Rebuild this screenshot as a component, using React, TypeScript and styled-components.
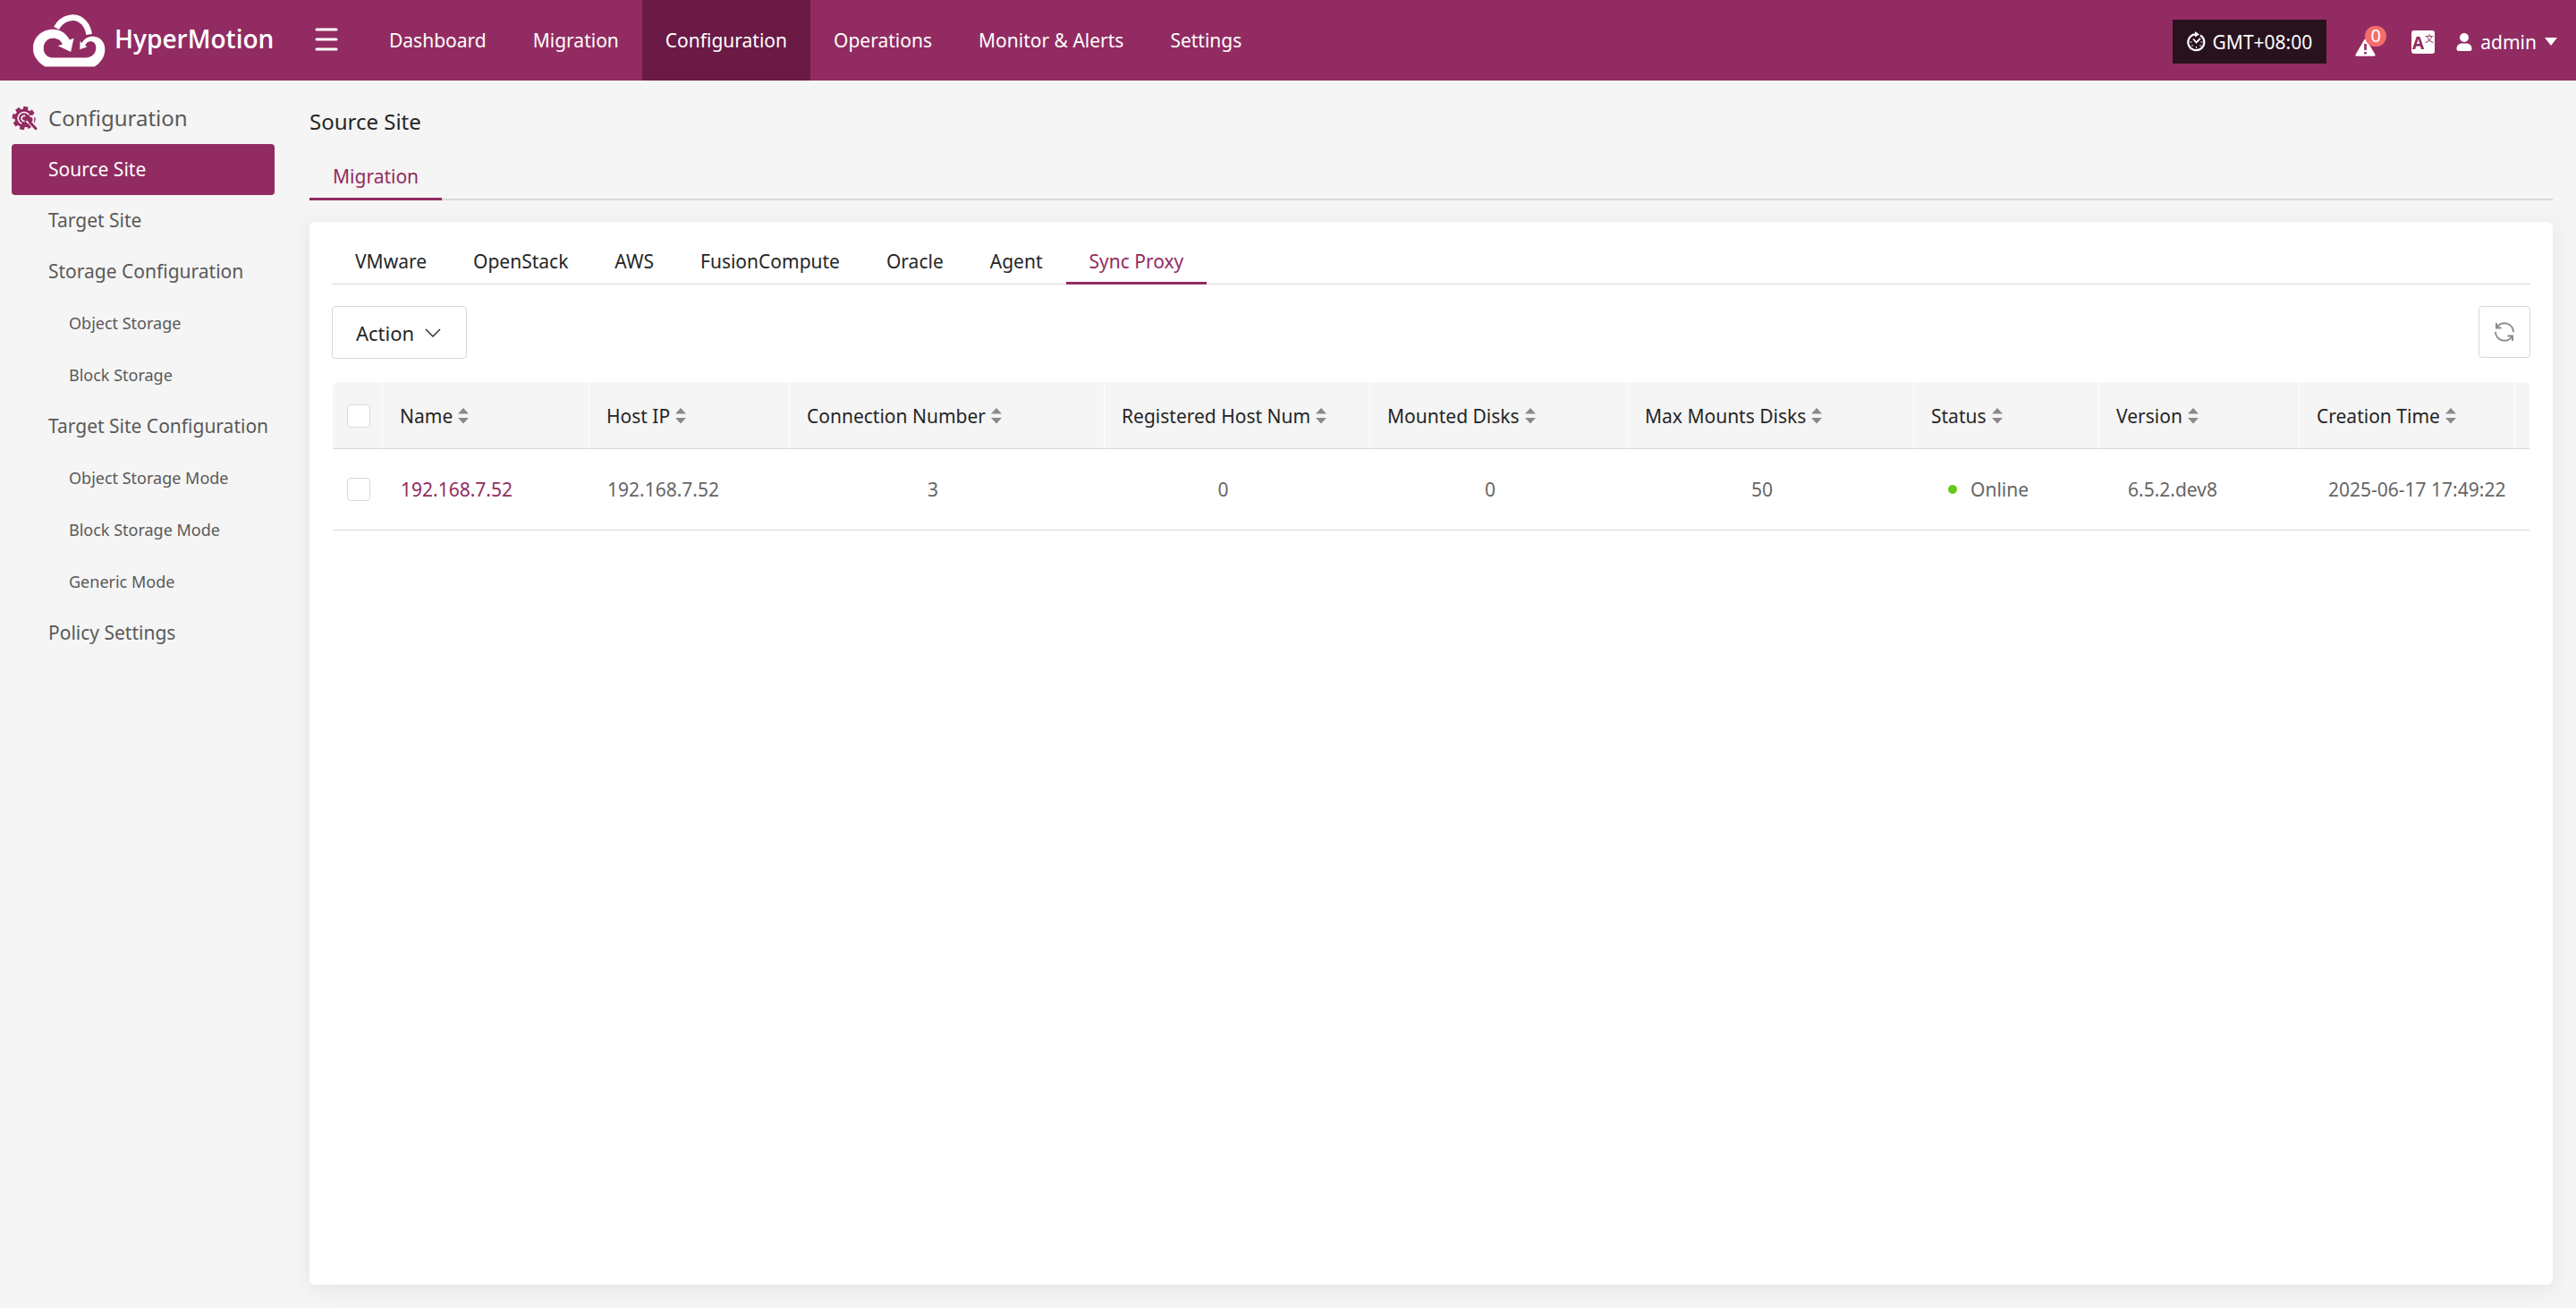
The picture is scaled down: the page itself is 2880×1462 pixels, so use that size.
import React from "react";
import styled, { createGlobalStyle, css } from "styled-components";

const color = {
  brand: "#922b61",
  brandDark: "#6a1a45",
  page: "#f5f5f5",
  line: "#d9d9d9",
  ink: "#262626",
  body: "#666666",
  side: "#595959",
  badge: "#f56c6c",
  online: "#67c817",
};

const GlobalStyle = createGlobalStyle`
  *, *::before, *::after { box-sizing: border-box; }
  body {
    margin: 0;
    background: ${color.page};
    color: ${color.ink};
    font-family: "Segoe UI", "Noto Sans", "Noto Sans CJK SC", sans-serif;
    font-size: 21px;
    line-height: 30px;
  }
  button { font: inherit; color: inherit; background: none; border: 0; padding: 0; cursor: pointer; }
  a { color: inherit; text-decoration: none; }
  svg { display: block; flex: none; }
`;

const Page = styled.div`
  min-height: 100vh;
  display: flex;
  flex-direction: column;
`;

const Header = styled.header`
  display: flex;
  align-items: center;
  height: 90px;
  padding: 0 21px 0 37px;
  background: ${color.brand};
  color: #fff;
`;

const Brand = styled.a`
  display: flex;
  align-items: center;
  gap: 10px;
  width: 315px;
  font-family: "Open Sans", "Noto Sans", sans-serif;
  font-size: 28px;
  line-height: 40px;
  font-weight: 600;
`;

const BrandName = styled.span`
  padding-bottom: 4px;
`;

const MenuToggle = styled.button`
  width: 57px;
`;

const TopNav = styled.nav`
  display: flex;
  align-self: stretch;
`;

const TopLink = styled.a<{ $active?: boolean }>`
  display: flex;
  align-items: center;
  padding: 0 26px;
  background: ${(p) => (p.$active ? color.brandDark : "transparent")};
`;

const HeaderTools = styled.div`
  display: flex;
  align-items: center;
  margin-left: auto;
  padding-top: 3px;
`;

const Timezone = styled.button`
  display: flex;
  align-items: center;
  gap: 8px;
  height: 49px;
  padding: 0 16px;
  background: #28121e;
`;

const AlertButton = styled.button`
  position: relative;
  display: flex;
  align-items: flex-end;
  height: 32px;
  margin: 0 40px 0 32px;
`;

const Badge = styled.span`
  position: absolute;
  left: 11px;
  top: -2px;
  width: 24px;
  height: 23px;
  border-radius: 12px;
  background: ${color.badge};
  font-size: 20px;
  line-height: 22px;
  text-align: center;
`;

const UserButton = styled.button`
  display: flex;
  align-items: center;
  gap: 9px;
  margin-left: 24px;
`;

const Body = styled.div`
  flex: 1;
  display: flex;
`;

const Sidebar = styled.aside`
  flex: none;
  width: 320px;
  padding: 24px 13px;
  color: ${color.side};
`;

const SideTitle = styled.h2`
  display: flex;
  align-items: center;
  gap: 12px;
  margin: 0 0 11px;
  font-size: 24px;
  line-height: 36px;
  font-weight: 400;
`;

const SideNav = styled.nav`
  width: 294px;
`;

const SideLink = styled.a<{ $sub?: boolean; $active?: boolean }>`
  display: block;
  padding-left: 41px;
  line-height: 57px;
  border-radius: 4px;
  white-space: nowrap;
  ${(p) =>
    p.$sub &&
    css`
      padding-left: 64px;
      font-size: 18px;
      line-height: 58px;
    `}
  ${(p) =>
    p.$active &&
    css`
      background: ${color.brand};
      color: #fff;
    `}
`;

const Main = styled.main`
  flex: 1;
  min-width: 0;
  display: flex;
  flex-direction: column;
  padding: 28px 26px 26px;
`;

const Title = styled.h1`
  margin: 0 0 18px;
  font-size: 24px;
  line-height: 36px;
  font-weight: 400;
`;

const Tabs = styled.div<{ $rule: number }>`
  display: flex;
  box-shadow: inset 0 -${(p) => p.$rule}px ${color.line};
`;

const Tab = styled.button<{ $active?: boolean }>`
  height: 50px;
  padding: 0 26px;
  color: ${(p) => (p.$active ? color.brand : color.ink)};
  border-bottom: 3px solid ${(p) => (p.$active ? color.brand : "transparent")};
`;

const SiteTab = styled(Tab)`
  height: 52px;
`;

const Card = styled.section`
  flex: 1;
  margin-top: 24px;
  padding: 20px 25px 25px;
  background: #fff;
  border-radius: 6px;
  box-shadow: 0 4px 24px rgba(0, 0, 0, 0.08);
`;

const Toolbar = styled.div`
  display: flex;
  justify-content: space-between;
  margin: 24px 0 26px;
`;

const ActionButton = styled.button`
  display: flex;
  align-items: center;
  gap: 12px;
  height: 59px;
  padding: 0 28px 0 26px;
  border: 1px solid ${color.line};
  border-radius: 4px;
  font-size: 22px;
`;

const RefreshButton = styled.button`
  display: flex;
  align-items: center;
  justify-content: center;
  width: 58px;
  height: 58px;
  border: 1px solid ${color.line};
  border-radius: 4px;
  color: #8a8a8a;
`;

const TableWrap = styled.div`
  margin: 0 1px;
`;

const Table = styled.table`
  width: 100%;
  table-layout: fixed;
  border-collapse: separate;
  border-spacing: 0;
`;

const Th = styled.th`
  height: 75px;
  padding: 2px 0 0 19px;
  background: ${color.page};
  border-right: 1px solid #fff;
  border-bottom: 1px solid ${color.line};
  text-align: left;
  font-weight: 400;
  white-space: nowrap;
  &:first-child { border-top-left-radius: 6px; padding-left: 16px; }
  &:last-child { border-top-right-radius: 6px; border-right: 0; }
`;

const SortButton = styled.button`
  display: flex;
  align-items: center;
  gap: 6px;
`;

const Td = styled.td<{ $align?: "center"; $left?: number; $right?: number }>`
  height: 91px;
  padding: 0 ${(p) => p.$right ?? 0}px 0 ${(p) => p.$left ?? 0}px;
  border-bottom: 1px solid ${color.line};
  color: ${color.body};
  text-align: ${(p) => p.$align ?? "left"};
  white-space: nowrap;
`;

const RowLink = styled.a`
  color: ${color.brand};
`;

const Check = styled.input`
  appearance: none;
  display: block;
  width: 26px;
  height: 26px;
  margin: 0;
  background: #fff;
  border: 1px solid ${color.line};
  border-radius: 4px;
`;

const Status = styled.span`
  display: flex;
  align-items: center;
  gap: 15px;
  &::before {
    content: "";
    width: 10px;
    height: 10px;
    border-radius: 50%;
    background: ${color.online};
  }
`;

const LogoIcon = () => (
  <svg width="81" height="59" viewBox="110 46 242 176" fill="#fff" aria-hidden="true">
    <path d="M188 92C205 58 252 42 280 74C290 86 295 98 297 113" fill="none" stroke="#fff" strokeWidth="20" />
    <path d="M150 221C125 205 110 185 110 160C110 122 140 96 176 96C200 96 220 108 232 131L246 126L236 171L193 151L208 146C202 132 192 126 176 126C158 126 145 140 145 160C145 178 158 190 175 191L286 191C305 190 320 178 320 158C320 143 312 136 302 136C293 136 287 142 284 150L291 154L266 163L267 135L273 142C281 126 295 120 309 120C333 120 350 138 350 163C350 188 335 208 315 221Z" />
  </svg>
);

const MenuIcon = () => (
  <svg width="26" height="28" viewBox="0 0 26 28" stroke="#fff" strokeWidth="3" strokeLinecap="round" aria-hidden="true">
    <path d="M2 2H24M2 13H24M2 24H24" />
  </svg>
);

const GearIcon = () => (
  <svg width="29" height="27" viewBox="38 354 87 81" aria-hidden="true">
    <g fill={color.brand}>
      <circle cx="79" cy="393" r="31" />
      {[0, 45, 90, 135, 180, 225, 270, 315].map((a) => (
        <rect key={a} x="71" y="354" width="16" height="14" rx="2" transform={`rotate(${a + 10} 79 393)`} />
      ))}
    </g>
    <path d="M72 412A20 20 0 1 1 96 382" fill="none" stroke={color.page} strokeWidth="5" />
    <path d="M84 386A9 9 0 1 0 82 403" fill="none" stroke={color.page} strokeWidth="5" />
    <path d="M98 386A12 12 0 1 1 88 402" fill="none" stroke={color.page} strokeWidth="5" />
    <path d="M102 409L120 429" stroke={color.page} strokeWidth="16" />
    <path d="M100 407L119 428" stroke={color.brand} strokeWidth="9" strokeLinecap="round" />
  </svg>
);

const ClockIcon = () => (
  <svg width="21" height="23" viewBox="0 0 21 23" fill="none" stroke="#fff" aria-hidden="true">
    <path d="M15 4.5A9 9 0 1 1 9 3.3" strokeWidth="2.2" />
    <path d="M9 0L14 3.4L9 6.6Z" fill="#fff" stroke="none" />
    <path d="M7 8.5L10.5 12.5L15 8" strokeWidth="1.8" />
    <path d="M3.5 12H5.5M15.5 12H17.5M10.5 17V19M5.5 16.5L6.5 15.5M15.5 16.5L14.5 15.5" strokeWidth="1.2" />
  </svg>
);

const WarningIcon = () => (
  <svg width="23" height="20" viewBox="0 0 23 20" aria-hidden="true">
    <path d="M11.5 0.5Q12.3 0.5 12.8 1.4L22.5 18Q23 19.8 21.5 19.8H1.5Q0 19.8 0.5 18L10.2 1.4Q10.7 0.5 11.5 0.5Z" fill="#fff" />
    <path d="M11.5 6V13M11.5 15V17.5" stroke={color.brand} strokeWidth="2.6" />
  </svg>
);

const LanguageIcon = () => (
  <svg width="26" height="26" viewBox="0 0 26 26" fill={color.brand} aria-hidden="true">
    <rect width="26" height="26" rx="3" fill="#fff" />
    <text x="1" y="21" fontSize="19" fontWeight="700" fontFamily="Noto Sans, sans-serif">A</text>
    <text x="15" y="13" fontSize="10" fontFamily="Noto Sans CJK SC, sans-serif">文</text>
  </svg>
);

const UserIcon = () => (
  <svg width="18" height="20" viewBox="0 0 18 20" fill="#fff" aria-hidden="true">
    <circle cx="9" cy="5" r="5" />
    <path d="M0.5 17.5C0.5 14 3 11.5 6.5 11.5H11.5C15 11.5 17.5 14 17.5 17.5Q17.5 20 15 20H3Q0.5 20 0.5 17.5Z" />
  </svg>
);

const CaretIcon = () => (
  <svg width="14" height="9" viewBox="0 0 14 9" fill="#fff" aria-hidden="true">
    <path d="M0 0H14L7 9Z" />
  </svg>
);

const ChevronIcon = () => (
  <svg width="18" height="10" viewBox="0 0 18 10" fill="none" stroke="#333" strokeWidth="1.5" aria-hidden="true">
    <path d="M1 1L9 9L17 1" />
  </svg>
);

const RefreshIcon = () => (
  <svg width="24" height="24" viewBox="0 0 24 24" fill="none" stroke="currentColor" strokeWidth="2" aria-hidden="true">
    <path d="M3.5 7A10 10 0 0 1 22 12M20.500 17A10 10 0 0 1 2 12" />
    <path d="M3 2V7.500H8.500M21 22V16.500H15.500" />
  </svg>
);

const SortIcon = () => (
  <svg width="12" height="18" viewBox="0 0 12 18" fill="#8a8a8a" aria-hidden="true">
    <path d="M0 6.5L6 0L12 6.5ZM0 11H12L6 17.5Z" />
  </svg>
);

const topLinks = ["Dashboard", "Migration", "Configuration", "Operations", "Monitor & Alerts", "Settings"];

const sideLinks = [
  { label: "Source Site", active: true },
  { label: "Target Site" },
  { label: "Storage Configuration" },
  { label: "Object Storage", sub: true },
  { label: "Block Storage", sub: true },
  { label: "Target Site Configuration" },
  { label: "Object Storage Mode", sub: true },
  { label: "Block Storage Mode", sub: true },
  { label: "Generic Mode", sub: true },
  { label: "Policy Settings" },
];

const platforms = ["VMware", "OpenStack", "AWS", "FusionCompute", "Oracle", "Agent", "Sync Proxy"];

const columns = [
  { label: "Name", width: 231 },
  { label: "Host IP", width: 224 },
  { label: "Connection Number", width: 352 },
  { label: "Registered Host Num", width: 297 },
  { label: "Mounted Disks", width: 288 },
  { label: "Max Mounts Disks", width: 320 },
  { label: "Status", width: 207 },
  { label: "Version", width: 224 },
  { label: "Creation Time", width: 241 },
];

const rows = [
  {
    name: "192.168.7.52",
    ip: "192.168.7.52",
    connections: 3,
    hosts: 0,
    mounted: 0,
    maxMounts: 50,
    status: "Online",
    version: "6.5.2.dev8",
    created: "2025-06-17 17:49:22",
  },
];

export default function App() {
  return (
    <Page>
      <GlobalStyle />
      <Header>
        <Brand href="#">
          <LogoIcon />
          <BrandName>HyperMotion</BrandName>
        </Brand>
        <MenuToggle aria-label="Toggle menu">
          <MenuIcon />
        </MenuToggle>
        <TopNav>
          {topLinks.map((label) => (
            <TopLink key={label} href="#" $active={label === "Configuration"}>
              {label}
            </TopLink>
          ))}
        </TopNav>
        <HeaderTools>
          <Timezone>
            <ClockIcon />
            GMT+08:00
          </Timezone>
          <AlertButton aria-label="Alerts">
            <WarningIcon />
            <Badge>0</Badge>
          </AlertButton>
          <button aria-label="Language">
            <LanguageIcon />
          </button>
          <UserButton>
            <UserIcon />
            <span>admin</span>
            <CaretIcon />
          </UserButton>
        </HeaderTools>
      </Header>
      <Body>
        <Sidebar>
          <SideTitle>
            <GearIcon />
            Configuration
          </SideTitle>
          <SideNav>
            {sideLinks.map((l) => (
              <SideLink key={l.label} href="#" $sub={l.sub} $active={l.active}>
                {l.label}
              </SideLink>
            ))}
          </SideNav>
        </Sidebar>
        <Main>
          <Title>Source Site</Title>
          <Tabs $rule={2}>
            <SiteTab $active>Migration</SiteTab>
          </Tabs>
          <Card>
            <Tabs $rule={1}>
              {platforms.map((p) => (
                <Tab key={p} $active={p === "Sync Proxy"}>
                  {p}
                </Tab>
              ))}
            </Tabs>
            <Toolbar>
              <ActionButton>
                Action
                <ChevronIcon />
              </ActionButton>
              <RefreshButton aria-label="Refresh">
                <RefreshIcon />
              </RefreshButton>
            </Toolbar>
            <TableWrap>
              <Table>
                <colgroup>
                  <col width={56} />
                  {columns.map((c) => (
                    <col key={c.label} width={c.width} />
                  ))}
                  <col width={16} />
                </colgroup>
                <thead>
                  <tr>
                    <Th>
                      <Check type="checkbox" aria-label="Select all" />
                    </Th>
                    {columns.map((c) => (
                      <Th key={c.label}>
                        <SortButton>
                          {c.label}
                          <SortIcon />
                        </SortButton>
                      </Th>
                    ))}
                    <Th aria-hidden="true" />
                  </tr>
                </thead>
                <tbody>
                  {rows.map((r) => (
                    <tr key={r.name}>
                      <Td $left={16}>
                        <Check type="checkbox" aria-label={`Select ${r.name}`} />
                      </Td>
                      <Td $left={20}>
                        <RowLink href="#">{r.name}</RowLink>
                      </Td>
                      <Td $left={20}>{r.ip}</Td>
                      <Td $align="center" $right={32}>{r.connections}</Td>
                      <Td $align="center" $right={32}>{r.hosts}</Td>
                      <Td $align="center" $right={20}>{r.mounted}</Td>
                      <Td $align="center" $right={20}>{r.maxMounts}</Td>
                      <Td $left={38}>
                        <Status>{r.status}</Status>
                      </Td>
                      <Td $left={32}>{r.version}</Td>
                      <Td $left={32}>{r.created}</Td>
                      <Td />
                    </tr>
                  ))}
                </tbody>
              </Table>
            </TableWrap>
          </Card>
        </Main>
      </Body>
    </Page>
  );
}
